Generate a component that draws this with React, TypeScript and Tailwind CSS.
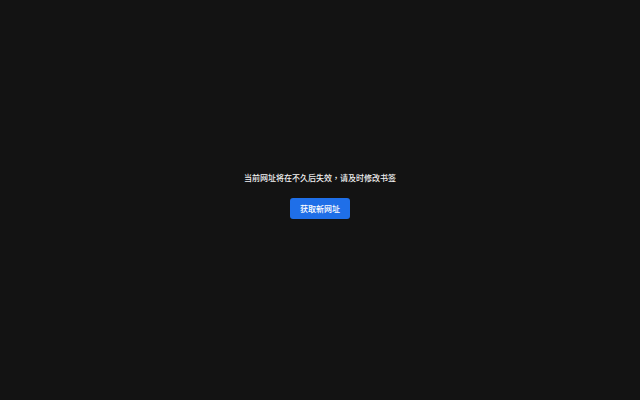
import React from 'react'

const App = () => {
  return (
    <div
      className="h-screen w-full bg-[#131313] flex flex-col items-center justify-center pb-[9px]"
      style={{ fontFamily: '"Noto Sans CJK TC", "Noto Sans", sans-serif' }}
    >
      <p className="text-[8px] leading-[12px] font-medium text-[#f0f0f0]">当前网址将在不久后失效，请及时修改书签</p>
      <button className="mt-[14px] w-[60px] h-[21px] rounded-[3px] bg-[#1f6fe8] text-[8px] font-medium text-white flex items-center justify-center">
        获取新网址
      </button>
    </div>
  )
}

export default App
